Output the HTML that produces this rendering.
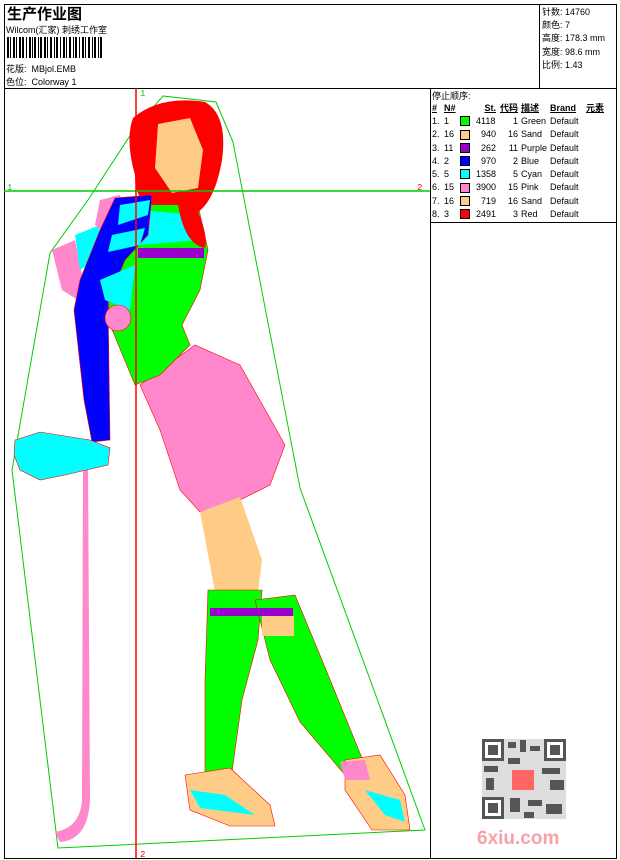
<!DOCTYPE html>
<html><head><meta charset="utf-8"><style>
*{margin:0;padding:0;box-sizing:border-box}
body{width:620px;height:860px;background:#fff;position:relative;overflow:hidden;font-family:"Liberation Sans","Noto Sans CJK SC",sans-serif;font-size:9px;color:#000}
.a{position:absolute;white-space:nowrap}
.l{position:absolute;background:#000}
table{border-collapse:collapse;font-size:9px}
td{height:13.3px;padding:0;white-space:nowrap}
.sw{display:inline-block;width:10px;height:10px;border:1px solid #000;vertical-align:middle}
</style></head><body>
<div class="l" style="left:4px;top:4px;width:613px;height:1px"></div>
<div class="l" style="left:4px;top:4px;width:1px;height:855px"></div>
<div class="l" style="left:616px;top:4px;width:1px;height:855px"></div>
<div class="l" style="left:4px;top:858px;width:613px;height:1px"></div>
<div class="l" style="left:4px;top:88px;width:613px;height:1px"></div>
<div class="l" style="left:539px;top:4px;width:1px;height:84px"></div>
<div class="l" style="left:430px;top:88px;width:1px;height:771px"></div>
<div class="l" style="left:430px;top:222px;width:187px;height:1px"></div>

<div class="a" style="left:7px;top:3px;font-size:15px;font-weight:bold">生产作业图</div>
<div class="a" style="left:6px;top:23px">Wilcom(汇家) 刺绣工作室</div>
<svg class="a" style="left:7px;top:37px" width="96" height="21">
<g fill="#000">
<rect x="0" width="2" height="21"/><rect x="3" width="1" height="21"/><rect x="6" width="2" height="21"/><rect x="9" width="1" height="21"/><rect x="12" width="2" height="21"/><rect x="15" width="2" height="21"/><rect x="19" width="1" height="21"/><rect x="22" width="2" height="21"/><rect x="25" width="1" height="21"/><rect x="27" width="2" height="21"/><rect x="31" width="1" height="21"/><rect x="33" width="2" height="21"/><rect x="37" width="2" height="21"/><rect x="40" width="1" height="21"/><rect x="43" width="2" height="21"/><rect x="47" width="1" height="21"/><rect x="49" width="2" height="21"/><rect x="53" width="1" height="21"/><rect x="56" width="2" height="21"/><rect x="59" width="1" height="21"/><rect x="62" width="2" height="21"/><rect x="66" width="1" height="21"/><rect x="68" width="2" height="21"/><rect x="72" width="1" height="21"/><rect x="75" width="2" height="21"/><rect x="78" width="1" height="21"/><rect x="81" width="2" height="21"/><rect x="85" width="1" height="21"/><rect x="87" width="2" height="21"/><rect x="91" width="1" height="21"/><rect x="93" width="2" height="21"/>
</g></svg>
<div class="a" style="left:6px;top:62px">花版:&nbsp; MBjol.EMB</div>
<div class="a" style="left:6px;top:75px">色位:&nbsp; Colorway 1</div>

<div class="a" style="left:542px;top:6px;line-height:13.2px">针数: 14760<br>颜色: 7<br>高度: 178.3 mm<br>宽度: 98.6 mm<br>比例: 1.43</div>

<div class="a" style="left:432px;top:89px">停止顺序:</div>
<table class="a" style="left:432px;top:101px">
<tr style="font-weight:bold;text-decoration:underline"><td style="width:12px">#</td><td style="width:16px">N#</td><td style="width:16px"></td><td style="width:20px;text-align:right">St.</td><td style="width:22px;text-align:right">代码</td><td style="width:32px;padding-left:3px">描述</td><td style="width:36px">Brand</td><td>元素</td></tr>
<tr><td>1.</td><td>1</td><td><span class="sw" style="background:#0f0"></span></td><td>4118</td><td style="text-align:right">1</td><td style="padding-left:3px">Green</td><td>Default</td><td></td></tr>
<tr><td>2.</td><td>16</td><td><span class="sw" style="background:#fc8"></span></td><td style="text-align:right">940</td><td style="text-align:right">16</td><td style="padding-left:3px">Sand</td><td>Default</td><td></td></tr>
<tr><td>3.</td><td>11</td><td><span class="sw" style="background:#90c"></span></td><td style="text-align:right">262</td><td style="text-align:right">11</td><td style="padding-left:3px">Purple</td><td>Default</td><td></td></tr>
<tr><td>4.</td><td>2</td><td><span class="sw" style="background:#00f"></span></td><td style="text-align:right">970</td><td style="text-align:right">2</td><td style="padding-left:3px">Blue</td><td>Default</td><td></td></tr>
<tr><td>5.</td><td>5</td><td><span class="sw" style="background:#0ff"></span></td><td>1358</td><td style="text-align:right">5</td><td style="padding-left:3px">Cyan</td><td>Default</td><td></td></tr>
<tr><td>6.</td><td>15</td><td><span class="sw" style="background:#f8c"></span></td><td>3900</td><td style="text-align:right">15</td><td style="padding-left:3px">Pink</td><td>Default</td><td></td></tr>
<tr><td>7.</td><td>16</td><td><span class="sw" style="background:#fc8"></span></td><td style="text-align:right">719</td><td style="text-align:right">16</td><td style="padding-left:3px">Sand</td><td>Default</td><td></td></tr>
<tr><td>8.</td><td>3</td><td><span class="sw" style="background:#f00"></span></td><td>2491</td><td style="text-align:right">3</td><td style="padding-left:3px">Red</td><td>Default</td><td></td></tr>
</table>

<svg class="a" style="left:0;top:0" width="430" height="858">
<polygon points="163,96 216,102 233,142 300,488 425,830 58,848 12,470 50,253 88,200 135,128" fill="none" stroke="#0c0" stroke-width="1"/>
<path d="M83,465 L88,465 L90,800 Q88,840 60,842 L55,832 Q80,828 82,800 Z" fill="#f8c"/>
<polygon points="140,385 195,345 240,365 285,445 270,485 240,500 200,512 180,490 160,430" fill="#f8c" stroke="#f00" stroke-width="0.6"/>
<polygon points="200,512 240,497 262,560 258,592 215,592" fill="#fc8"/>
<polygon points="208,590 262,590 258,640 242,700 232,772 205,772 205,680" fill="#0f0" stroke="#f00" stroke-width="0.6"/>
<polygon points="255,600 295,595 322,660 362,758 345,775 300,722 270,660" fill="#0f0" stroke="#f00" stroke-width="0.6"/>
<rect x="210" y="608" width="50" height="8" fill="#90c"/>
<rect x="258" y="608" width="35" height="8" fill="#90c"/>
<rect x="262" y="616" width="32" height="20" fill="#fc8"/>
<polygon points="185,775 230,768 270,805 275,826 230,826 190,810" fill="#fc8" stroke="#f00" stroke-width="0.6"/>
<polygon points="190,790 225,795 255,815 200,808" fill="#0ff"/>
<polygon points="345,760 380,755 405,795 410,830 372,830 345,790" fill="#fc8" stroke="#f00" stroke-width="0.6"/>
<polygon points="365,790 400,800 405,822 385,815" fill="#0ff"/>
<polygon points="340,762 365,760 370,780 345,780" fill="#f8c"/>
<polygon points="140,200 198,205 208,250 200,290 182,325 190,345 160,375 135,385 108,320 112,240" fill="#0f0" stroke="#f00" stroke-width="0.6"/>
<rect x="138" y="248" width="66" height="10" fill="#90c"/>
<polygon points="140,210 195,215 200,240 140,245" fill="#0ff"/>
<path d="M133,118 Q160,95 205,102 Q228,115 222,160 Q215,200 198,212 Q208,235 205,248 Q185,245 178,205 L150,205 Q135,200 135,175 Q125,140 133,118 Z" fill="#f00"/>
<polygon points="158,124 190,118 203,150 198,188 172,193 155,168" fill="#fc8"/>
<polygon points="52,250 75,240 82,275 78,300 62,290" fill="#f8c"/>
<polygon points="75,235 100,225 95,260 80,270" fill="#0ff"/>
<polygon points="100,200 120,195 130,230 112,240 95,225" fill="#f8c"/>
<polygon points="115,198 152,195 148,235 125,260 108,300 110,440 92,442 84,400 74,310 80,280 100,230" fill="#00f" stroke="#f00" stroke-width="0.6"/>
<polygon points="120,205 150,200 148,215 118,225" fill="#0ff"/>
<polygon points="112,235 145,228 140,245 108,252" fill="#0ff"/>
<polygon points="100,280 135,265 130,310 105,300" fill="#0ff"/>
<circle cx="118" cy="318" r="13" fill="#f8c" stroke="#f00" stroke-width="0.6"/>
<polygon points="15,440 40,432 90,440 110,448 108,465 65,475 40,480 20,470 14,455" fill="#0ff" stroke="#f00" stroke-width="0.6"/>
<line x1="4" y1="191" x2="430" y2="191" stroke="#0c0" stroke-width="1.5"/>
<line x1="136" y1="88" x2="136" y2="858" stroke="#f00" stroke-width="1.5"/>
<text x="140" y="96" font-size="9" fill="#0c0" font-family="Liberation Mono,monospace">1</text>
<text x="7" y="190" font-size="9" fill="#0c0" font-family="Liberation Mono,monospace">1</text>
<text x="417" y="190" font-size="9" fill="#f00" font-family="Liberation Mono,monospace">2</text>
<text x="140" y="857" font-size="9" fill="#f00" font-family="Liberation Mono,monospace">2</text>
</svg>

<svg class="a" style="left:480px;top:738px" width="90" height="82">
<rect x="2" y="1" width="84" height="80" fill="#ddd"/>
<g fill="#555">
<rect x="2" y="1" width="22" height="22"/><rect x="64" y="1" width="22" height="22"/><rect x="2" y="59" width="22" height="22"/>
<rect x="28" y="4" width="8" height="6"/><rect x="40" y="2" width="6" height="12"/><rect x="50" y="8" width="10" height="5"/>
<rect x="4" y="28" width="14" height="6"/><rect x="6" y="40" width="8" height="12"/><rect x="28" y="20" width="12" height="6"/>
<rect x="62" y="30" width="18" height="6"/><rect x="70" y="42" width="14" height="10"/><rect x="30" y="60" width="10" height="14"/>
<rect x="48" y="62" width="14" height="6"/><rect x="66" y="66" width="16" height="10"/><rect x="44" y="74" width="10" height="6"/>
</g>
<g fill="#fff"><rect x="5" y="4" width="16" height="16"/><rect x="67" y="4" width="16" height="16"/><rect x="5" y="62" width="16" height="16"/></g>
<g fill="#555"><rect x="8" y="7" width="10" height="10"/><rect x="70" y="7" width="10" height="10"/><rect x="8" y="65" width="10" height="10"/></g>
<rect x="32" y="32" width="22" height="20" fill="#f66"/>
</svg>
<div class="a" style="left:477px;top:828px;font-size:19px;font-weight:bold;color:#f8a0a8">6xiu.com</div>
</body></html>
